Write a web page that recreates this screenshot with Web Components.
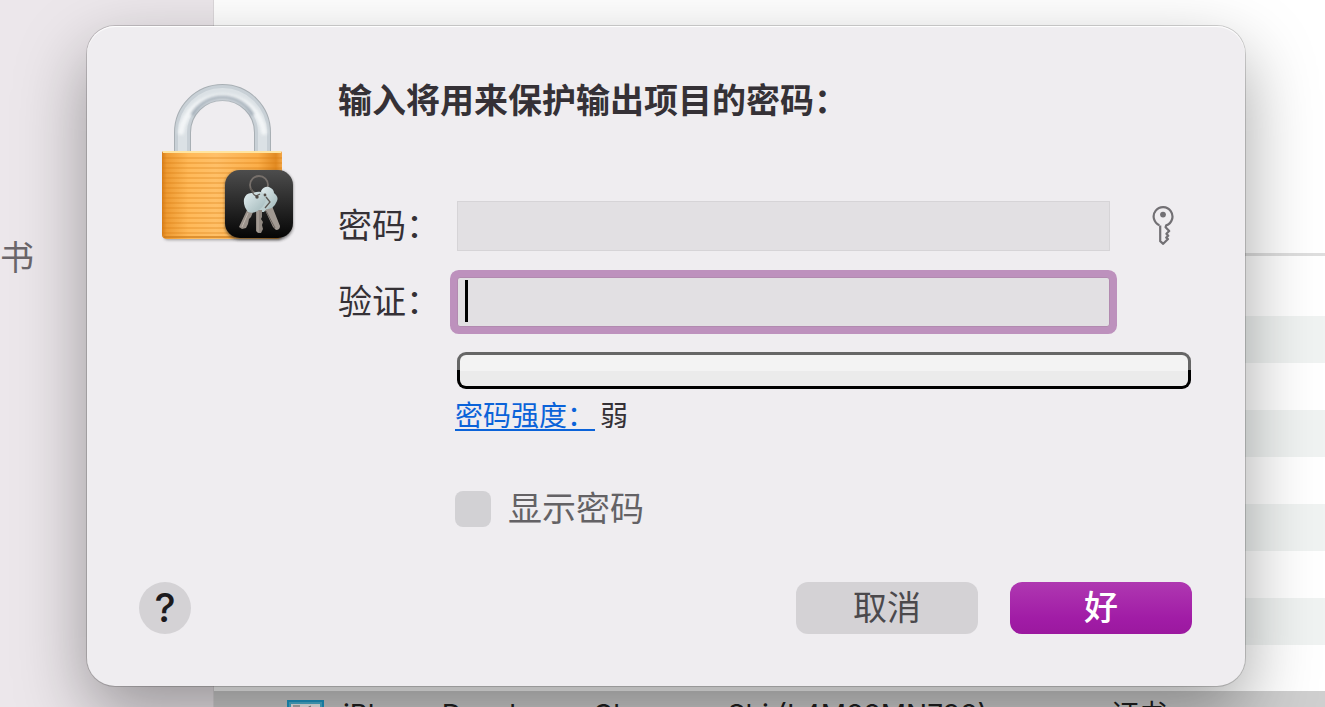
<!DOCTYPE html>
<html lang="zh-CN">
<head>
<meta charset="utf-8">
<title>钥匙串访问</title>
<style>
html, body { height: 100%; }
body { margin: 0; overflow: hidden; background: #fff; color: #353136; font-family: Inter, "Noto Sans CJK SC", sans-serif; }
</style>
</head>
<body>
<keychain-window>
  <span slot="sidebar">书</span>
  <span slot="name">iPhone Developer: Chenmao Shi (L4M88MN798)</span>
  <span slot="kind">证书</span>
</keychain-window>
<password-dialog>
  <span slot="title">输入将用来保护输出项目的密码：</span>
  <lock-icon slot="icon"></lock-icon>
  <password-field label="密码："><key-button></key-button></password-field>
  <password-field label="验证：" active></password-field>
  <strength-meter label="密码强度：" value="弱"></strength-meter>
  <check-option label="显示密码"></check-option>
  <push-button slot="help" kind="help">?</push-button>
  <push-button slot="actions">取消</push-button>
  <push-button slot="actions" kind="primary">好</push-button>
</password-dialog>
<script>
function define(name, html, setup) {
  const template = document.createElement('template');
  template.innerHTML = html;
  customElements.define(name, class extends HTMLElement {
    connectedCallback() {
      if (this.shadowRoot) return;
      this.attachShadow({ mode: 'open' }).append(template.content.cloneNode(true));
      if (setup) setup(this, this.shadowRoot);
    }
  });
}

define('keychain-window', `
<style>
:host { display: flex; height: 100vh; overflow: hidden; }
aside { flex: 0 0 214px; box-sizing: border-box; padding-top: 234px; background: #ece7eb; border-right: 1px solid #dcd8db; font-size: 34px; line-height: 48px; color: #6b666a; }
main { flex: 1; display: flex; flex-direction: column; background: #fff; }
header { flex: 0 0 253px; border-bottom: 3px solid #dedede; }
.rows { flex: 0 0 422px; margin-top: 13px; background: repeating-linear-gradient(#fff 0 47px, #f0f3f2 47px 94px); }
.selected { flex: 0 0 47px; display: grid; grid-template-columns: 38px 750px 1fr; column-gap: 18px; align-items: center; padding-left: 73px; background: #cfcfcf; color: #202020; font-size: 28px; line-height: 44px; white-space: nowrap; }
svg { display: block; }
</style>
<aside><slot name="sidebar"></slot></aside>
<main>
  <header></header>
  <div class="rows"></div>
  <div class="selected">
    <svg width="37" height="30" viewBox="0 0 37 30"><rect x="1" y="1" width="35" height="28" fill="#ddd" stroke="#1d9ccc" stroke-width="2"/><rect x="3" y="3" width="31" height="24" fill="#f4f4f4" stroke="#4cb6d6" stroke-width="2"/><path d="M6 6h7M6 8h5M20 8l4-2" stroke="#777"/></svg>
    <slot name="name"></slot><slot name="kind"></slot>
  </div>
</main>`);

define('password-dialog', `
<style>
:host { position: absolute; inset: 26px 80px auto 87px; box-sizing: border-box; padding: 51px 53px 52px 52px; border-radius: 28px; background: #efedf0; box-shadow: 0 0 0 1px rgba(0,0,0,.17), inset 0 1px 1px #fff, 0 28px 70px rgba(0,0,0,.36); }
.body { display: flex; gap: 44px; padding-left: 23px; }
.icon { flex: 0 0 132px; padding-top: 5px; }
.form { flex: 1; min-width: 0; }
h1 { margin: 0 0 76px; font-size: 34px; line-height: 48px; font-weight: 700; }
footer { display: flex; align-items: center; gap: 32px; margin-top: 55px; }
.help { flex: 1; }
</style>
<div class="body">
  <div class="icon"><slot name="icon"></slot></div>
  <div class="form"><h1><slot name="title"></slot></h1><slot></slot></div>
</div>
<footer><div class="help"><slot name="help"></slot></div><slot name="actions"></slot></footer>`,
host => { host.setAttribute('role', 'dialog'); });

define('password-field', `
<style>
:host { display: flex; align-items: center; margin-bottom: 26px; }
label { flex: 0 0 119px; font-size: 34px; line-height: 48px; white-space: nowrap; }
input { flex: 1; min-width: 0; height: 50px; box-sizing: border-box; margin: 0; padding: 0 8px; border: 1px solid #d6d4d7; border-radius: 0; outline: none; background: #e2e0e3; font: 28px "Liberation Sans", sans-serif; color: #000; }
:host([active]) input { border-color: #b28ab0; box-shadow: 0 0 0 7px #bd91bd; border-radius: 3px; background: linear-gradient(#000, #000) 7px 2px / 3px 42px no-repeat #e2e0e3; }
.trail { flex: 0 0 82px; display: flex; justify-content: flex-end; }
</style>
<label for="box"></label><input id="box" type="password"><div class="trail"><slot></slot></div>`,
(host, root) => { root.querySelector('label').textContent = host.getAttribute('label'); });

define('key-button', `
<style>
:host { display: block; }
button { display: grid; place-items: center; width: 58px; height: 48px; padding: 0; border: 0; background: none; color: #727074; }
</style>
<button aria-label="密码助理"><svg width="22" height="40" viewBox="0 0 22 40" fill="none" stroke="currentColor" stroke-width="2.2" stroke-linejoin="round"><path d="M7.4 19.2A9.4 9.4 0 1 1 14.2 19.4L13.6 21.2L17.2 25L14.4 27.7L16.2 29.8L14.2 31.6L16 33L11.2 37.8L8.2 35.2V19.6"/><circle cx="11" cy="8.6" r="2.9" fill="currentColor" stroke="none"/></svg></button>`);

define('strength-meter', `
<style>
:host { display: block; margin: -1px 0 57px; }
.bar { margin: 0 1px 9px 119px; padding: 3px; border-radius: 9px; background: linear-gradient(#666 0 50%, #000 50%); }
.fill { height: 31px; border-radius: 6px; background: linear-gradient(#f3f3f3 0 50%, #ebebeb 50%); }
p { display: flex; gap: 5px; margin: 0 0 0 117px; font-size: 28px; line-height: 36px; }
a { color: #0b63d9; text-decoration: underline; text-decoration-thickness: 2px; text-underline-offset: 3px; text-decoration-skip-ink: none; }
</style>
<div class="bar" role="meter" aria-valuemin="0" aria-valuemax="100" aria-valuenow="0"><div class="fill"></div></div>
<p><a href="#"></a><span></span></p>`,
(host, root) => {
  root.querySelector('a').textContent = host.getAttribute('label');
  root.querySelector('span').textContent = host.getAttribute('value');
});

define('check-option', `
<style>
:host { display: block; padding-left: 117px; }
label { display: flex; align-items: center; gap: 17px; height: 36px; font-size: 34px; line-height: 36px; color: #646265; }
input { appearance: none; width: 36px; height: 36px; margin: 0; border-radius: 8px; background: #d2d1d4; }
</style>
<label><input type="checkbox" disabled><span></span></label>`,
(host, root) => { root.querySelector('span').textContent = host.getAttribute('label'); });

define('push-button', `
<style>
:host { display: block; }
button { display: block; width: 182px; height: 52px; padding: 0; border: 0; border-radius: 12px; background: #d4d2d5; color: #4b494c; font: inherit; font-size: 34px; line-height: 50px; }
:host([kind=primary]) button { background: linear-gradient(#af38b1, #a11ca6 70%, #9b189f); color: #fff; font-weight: 500; }
:host([kind=help]) button { width: 52px; border-radius: 50%; color: #1c1a1d; font-weight: 500; font-size: 40px; line-height: 52px; }
</style>
<button><slot></slot></button>`);

define('lock-icon', `
<style>:host { display: block; } svg { display: block; overflow: visible; }</style>
<svg width="132" height="160" viewBox="0 0 132 160" role="img" aria-label="钥匙串">
<defs>
<linearGradient id="body"><stop stop-color="#d77d18"/><stop offset=".04" stop-color="#ee9b33"/><stop offset=".22" stop-color="#ffb958"/><stop offset=".45" stop-color="#ffc068"/><stop offset=".8" stop-color="#fbae49"/><stop offset=".95" stop-color="#e18a22"/><stop offset="1" stop-color="#f3a646"/></linearGradient>
<linearGradient id="badge" x2="0" y2="1"><stop stop-color="#4d4d4d"/><stop offset="1" stop-color="#050505"/></linearGradient>
<linearGradient id="key" x2="1" y2="1"><stop stop-color="#e3eef0"/><stop offset="1" stop-color="#9fb6b8"/></linearGradient>
<pattern id="lines" width="120" height="5" patternUnits="userSpaceOnUse"><rect width="120" height="2" fill="#d67a10" opacity=".28"/></pattern>
<filter id="soft" x="-20%" y="-20%" width="140%" height="140%"><feGaussianBlur stdDeviation="1.4"/></filter>
</defs>
<rect x="2" y="146" width="118" height="12" rx="4" fill="#555" opacity=".55" filter="url(#soft)"/>
<g fill="none"><path d="M20.5 71V50.5a40 40 0 0 1 80 0V71" stroke="#a8afb4" stroke-width="17"/><path d="M20.5 71V50.5a40 40 0 0 1 80 0V71" stroke="#c8d0d6" stroke-width="15"/><path d="M20.5 71V50.5a40 40 0 0 1 80 0V71" stroke="#dbe1e5" stroke-width="9"/><path d="M19 50a42 42 0 0 1 83 0" stroke="#f7f9fa" stroke-width="6" stroke-linecap="round" opacity=".85" filter="url(#soft)"/><path d="M30 33A35 35 0 0 1 91 33" stroke="#7f8d9b" stroke-width="3" opacity=".7" filter="url(#soft)"/></g>
<path d="M0 71q0-2 2-2h116q2 0 2 2v82q0 4-6 4H6q-6 0-6-4z" fill="url(#body)"/>
<path d="M0 73h120v80H0z" fill="url(#lines)"/><path d="M1 70h118" stroke="#ffe5a0" stroke-width="2"/><path d="M2 155h114" stroke="#c97615" stroke-width="2" opacity=".6"/>
<rect x="63" y="89" width="68" height="69" rx="15" fill="#222" opacity=".6" filter="url(#soft)"/>
<rect x="63" y="88" width="68" height="68" rx="15" fill="url(#badge)"/>
<circle cx="97" cy="103" r="9" fill="none" stroke="#77706b" stroke-width="1.8"/>
<path d="M103 128l7-4 8 20q0 4-4 4l-3-3z" fill="#a19992"/><path d="M104 129l9 17" stroke="#6a625c"/>
<path d="M99 109q3-5 8-4q5 2 5 6q5 4 3 8q-2 5-5 7l-8 2z" fill="url(#key)"/>
<path d="M96 113q8-3 10 3q4 4 1 8l-5 6h-6z" fill="#bdcfd0"/>
<path d="M94 128h6v7l-1 2 2 3-1 3 1 4-2 4h-3l-2-2z" fill="#918982"/><path d="M96 129v21" stroke="#b5aca4"/>
<path d="M85 128l6 2-2 5-2 2-1 5-2 4-4 1-3-2z" fill="#9a928b"/><path d="M86 131l-6 14" stroke="#c0b7af"/>
<path d="M86 130q-5-6-4-13q2-7 9-6q10-4 13 4q0 8-7 13q-5 4-11 2z" fill="url(#key)"/>
<path d="M89 106q1 6 5 8l4-2M104 115l4 5-5 6" fill="none" stroke="#5d5853" stroke-width="1.3"/><circle cx="95" cy="115" r="1.7" fill="#514b46"/><circle cx="103" cy="113" r="1.4" fill="#514b46"/>
</svg>`);
</script>
</body>
</html>
